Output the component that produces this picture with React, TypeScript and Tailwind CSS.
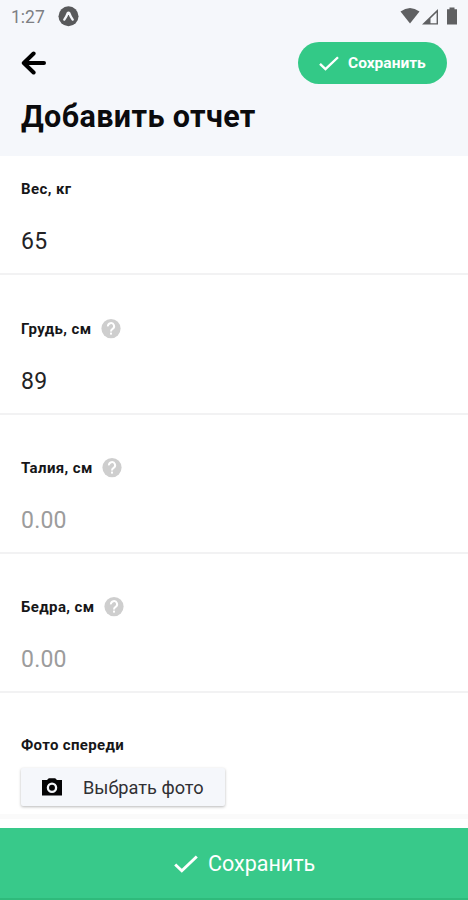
interface Measurement {
  id: string;
  label: string;
  value: string;
  hint: boolean;
  height: string;
}

const measurements: Measurement[] = [
  { id: "weight", label: "Вес, кг", value: "65", hint: false, height: "h-[119px]" },
  { id: "chest", label: "Грудь, см", value: "89", hint: true, height: "h-[140px]" },
  { id: "waist", label: "Талия, см", value: "", hint: true, height: "h-[139px]" },
  { id: "hips", label: "Бедра, см", value: "", hint: true, height: "h-[139px]" },
];

function CheckIcon({ className }: { className?: string }) {
  return (
    <svg viewBox="0 0 24 18" className={className} fill="none" stroke="currentColor" strokeWidth="2.9">
      <path d="M1.2 9.5 L7.8 15.8 L22.8 1.5" />
    </svg>
  );
}

function BackIcon() {
  return (
    <svg width="25" height="24" viewBox="0 0 25 24" fill="none" stroke="#000" strokeWidth="4" strokeLinecap="round" strokeLinejoin="round">
      <path d="M12.6 2.5 L2.8 12 L12.6 21.5 M3 12 H23" />
    </svg>
  );
}

function HelpIcon() {
  return (
    <svg width="20" height="20" viewBox="0 0 20 20" fill="none">
      <circle cx="10" cy="9.6" r="9.6" fill="#cecece" />
      <path d="M6.9 7.4 A3.1 3.1 0 1 1 11.6 9.9 Q10 10.9 10 12.4" stroke="#fff" strokeWidth="2" />
      <rect x="9" y="13.6" width="2" height="2" fill="#fff" />
    </svg>
  );
}

function CameraIcon() {
  return (
    <svg width="20" height="18" viewBox="0 0 20 18">
      <path d="M0 2 H5 L6.8 0.2 H13.2 L15 2 H20 V17.6 H0 Z" fill="#050506" />
      <circle cx="10" cy="9.8" r="4.1" fill="none" stroke="#f5f7fb" strokeWidth="2.3" />
    </svg>
  );
}

function StatusBar() {
  return (
    <div className="flex h-8 items-center justify-between pl-[11px] pr-[10px]">
      <div className="flex items-center gap-[13px]">
        <span className="pt-px text-[17.5px] leading-8 text-[#7d7f83]">1:27</span>
        <svg width="21" height="21" viewBox="0 0 21 21">
          <circle cx="10.5" cy="10.2" r="10" fill="#58595b" />
          <path d="M6.3 13.6 Q8.4 10.8 9.6 7.3 Q10.5 6.2 11.4 7.3 Q12.6 10.8 14.7 13.6" fill="none" stroke="#f5f7fb" strokeWidth="2.4" strokeLinecap="round" strokeLinejoin="round" />
        </svg>
      </div>
      <svg width="58" height="20" viewBox="0 0 58 20" fill="#5f6062">
        <path d="M0.5 5.5 Q10 -1.5 19.5 5.5 L10 17.5 Z" />
        <path d="M22 18.5 L38 3 V18.5 Z M30.5 12.5 V17.2 H36.6 V6.6 Z" fillRule="evenodd" />
        <path d="M49.5 1.5 H54.5 V3.2 H57 V18.5 H47 V3.2 H49.5 Z" />
      </svg>
    </div>
  );
}

function MeasurementField({ item }: { item: Measurement }) {
  return (
    <div className={`flex flex-col justify-end border-b-2 border-[#f2f2f3] ${item.height}`}>
      <div className="flex h-5 items-center gap-[9px] pl-[21px]">
        <label htmlFor={item.id} className="text-[15px] leading-5 font-bold tracking-[0.4px] text-[#161618]">{item.label}</label>
        {item.hint && <HelpIcon />}
      </div>
      <input
        id={item.id}
        type="text"
        defaultValue={item.value}
        placeholder="0.00"
        className="mt-[27px] mb-[15px] h-8 w-full bg-transparent pl-[21px] text-[23px] leading-8 tracking-[0.2px] text-[#232325] outline-none placeholder:text-[#9c9c9c]"
      />
    </div>
  );
}

export default function App() {
  return (
    <div className="flex h-[900px] w-[468px] flex-col overflow-hidden bg-white font-['Roboto','Noto_Sans',sans-serif]">
      <header className="h-[156px] shrink-0 bg-[#f5f7fb]">
        <StatusBar />
        <div className="mt-[10px] flex h-[42px] items-center justify-between pl-[21px] pr-[21px]">
          <button type="button" aria-label="Назад"><BackIcon /></button>
          <button type="button" className="flex h-[42px] w-[149px] items-center rounded-full bg-[#33c987] pl-[21px] text-white">
            <CheckIcon className="h-[15px] w-5" />
            <span className="ml-[9px] pt-[2px] text-[15.5px] font-bold">Сохранить</span>
          </button>
        </div>
        <h1 className="mt-[13px] pl-[21px] text-[30.5px] leading-10 font-bold tracking-[0.38px] text-[#0b0b0d]">Добавить отчет</h1>
      </header>

      <main className="flex-1">
        {measurements.map((item) => <MeasurementField key={item.id} item={item} />)}
        <div className="pt-[42px] pl-[21px]">
          <p className="text-[15px] leading-5 font-bold tracking-[0.35px] text-[#161618]">Фото спереди</p>
          <button type="button" className="mt-[13px] flex h-[38px] w-[204px] items-center rounded-[2px] bg-[#f5f7fb] pl-[21px] shadow-[0_1px_3px_rgba(0,0,0,0.28)]">
            <CameraIcon />
            <span className="ml-[21px] pt-px text-[18.2px] text-[#303033]">Выбрать фото</span>
          </button>
        </div>
      </main>

      <div className="mb-[9px] h-[5px] shrink-0 bg-[#fafafa]" />
      <button type="button" className="flex h-[72px] shrink-0 items-center border-b-2 border-[#2fba7b] bg-[#38c98a] pt-[2px] pl-[174px] text-white">
        <CheckIcon className="h-[18px] w-6" />
        <span className="ml-[10px] pt-px text-[21.5px]">Сохранить</span>
      </button>
    </div>
  );
}
